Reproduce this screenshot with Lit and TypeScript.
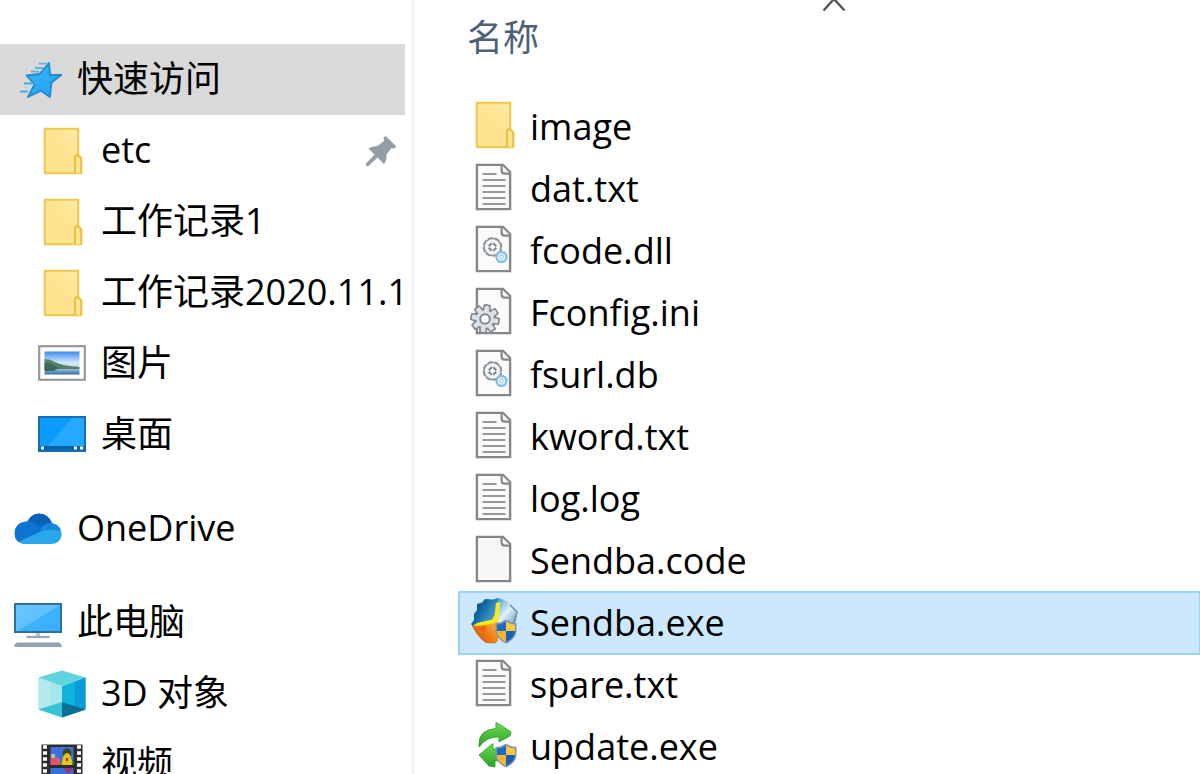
import { LitElement, html, css, svg, nothing, type TemplateResult } from "lit";
import { customElement, state } from "lit/decorators.js";
import { classMap } from "lit/directives/class-map.js";

const folder = svg`
  <defs>
    <linearGradient id="folderFill" x1="0" y1="1" x2="1" y2="0">
      <stop offset="0" stop-color="#ffe48a"></stop><stop offset="0.5" stop-color="#ffe391"></stop><stop offset="1" stop-color="#ffeba6"></stop>
    </linearGradient>
  </defs>
  <path d="M6.8 1.8H40.2V28.5L43.2 31.5V46.2H6.8Z" fill="url(#folderFill)" stroke="#ecc846" stroke-width="2"></path>
  <path d="M37 46V30.5Q37 28.3 38.6 28.3H40.4L43.2 31.5V46.2" fill="#ffe590" stroke="#e6c040" stroke-width="2"></path>`;

const sheet = svg`
  <path d="M6.9 1.9H33L40.1 9V46.1H6.9Z" fill="#fbfbfb" stroke="#858888" stroke-width="2.400"></path>
  <path d="M31.6 2V7.5Q31.6 10.6 34.6 10.6H40.1" fill="#f6f6f6" stroke="#858888" stroke-width="2.200"></path>`;

const textFile = svg`${sheet}
  <path d="M12.5 11H26.5M12.5 17H35.5M12.5 23H35.5M12.5 29H35.5M12.5 35H35.5M12.5 41H35.5" stroke="#969999" stroke-width="2.200"></path>`;

const blankFile = svg`${sheet}
  <path d="M10 5H29V13H37V43H10Z" fill="#f5f6f6"></path>`;

const libraryFile = svg`${sheet}
  <circle cx="22.5" cy="22" r="8.800" fill="#f3f5f6" stroke="#8b9399" stroke-width="2.200"></circle>
  <circle cx="22.5" cy="22" r="9.800" fill="none" stroke="#fbfbfb" stroke-width="1.600" stroke-dasharray="2 5.700"></circle>
  <path d="M22.5 17.500L27 22L22.5 26.500L18 22Z" fill="#fff" stroke="#788087" stroke-width="2" stroke-dasharray="4.400 2" stroke-dashoffset="-1"></path>
  <circle cx="31.5" cy="32" r="5" fill="#e4f3fc" stroke="#86bfe2" stroke-width="2.4"></circle>
  <circle cx="31.5" cy="32" r="1.8" fill="#fff" stroke="#a6d0ea" stroke-width="1.2"></circle>`;

const teeth = [0, 45, 90, 135, 180, 225, 270, 315];
const settingsFile = svg`${sheet}
  <g stroke="#7f878c" stroke-width="1.6" fill="#dce2e6">
    ${teeth.map((a) => svg`<path d="M-3.6 -9L-2.6 -14H2.6L3.6 -9Z" transform="translate(15 32) rotate(${a + 10})"></path>`)}
    <circle cx="15" cy="32" r="9.6"></circle>
  </g>
  ${teeth.map((a) => svg`<path d="M-2.4 -8L-2 -12H2L2.4 -8Z" fill="#dce2e6" transform="translate(15 32) rotate(${a + 10})"></path>`)}
  <circle cx="15" cy="32" r="4.8" fill="#fff" stroke="#7f878c" stroke-width="2"></circle>`;

const shield = svg`
  <path d="M36 22.5Q41 26 46.5 26V34Q46 42 36 46.5Q26 42 25.5 34V26Q31 26 36 22.5Z" fill="#7d97a8"></path>
  <path d="M36 24.5V34H27V27.5Q32 27.3 36 24.5Z" fill="#1d6bc6"></path>
  <path d="M36 24.5Q40 27.3 45 27.5V34H36Z" fill="#ffc73c"></path>
  <path d="M27 34H36V45Q27.6 41 27 34Z" fill="#fbb52a"></path>
  <path d="M45 34H36V45Q44.4 41 45 34Z" fill="#1560b9"></path>`;

const sendba = svg`
  <defs>
    <linearGradient id="sendBlue" x1="0" y1="0" x2="1" y2="0.6">
      <stop offset="0" stop-color="#0c3f78"></stop><stop offset="0.45" stop-color="#1669a6"></stop><stop offset="0.7" stop-color="#2f8fc6"></stop><stop offset="1" stop-color="#5d8fb0"></stop>
    </linearGradient>
    <linearGradient id="sendGlass" x1="0" y1="0" x2="0.8" y2="1">
      <stop offset="0" stop-color="#3a98cc"></stop><stop offset="0.55" stop-color="#e2f2fa"></stop><stop offset="1" stop-color="#6f9fba"></stop>
    </linearGradient>
    <linearGradient id="sendOrange" x1="0" y1="0.8" x2="1" y2="0">
      <stop offset="0" stop-color="#d24e08"></stop><stop offset="0.5" stop-color="#f08018"></stop><stop offset="1" stop-color="#ffc040"></stop>
    </linearGradient>
  </defs>
  <path d="M28 1L23 2.500L15 2L12 5.500L7 7L7 13L4 17L4 23L1 27L3 30L22 27L29 22L31 5Z" fill="url(#sendBlue)"></path>
  <path d="M28 1L34 3L40 7L43 12L47 15L46 24L42 29L27 24Z" fill="url(#sendGlass)"></path>
  <path d="M40 8L47 15L44 26" fill="none" stroke="#6b8da3" stroke-width="1.500"></path>
  <path d="M2 29L13 26L28 22V44L25 46.500L16 46L11 42L6 36Z" fill="url(#sendOrange)"></path>
  <path d="M9 31L16 27.500L15 37Z" fill="#e9640f"></path>
  <path d="M26 6L30 5L29 19L27 25L17 28L3 29L7 26L22 22.500L24.500 18Z" fill="#f7ea1a"></path>
  ${shield}`;

const update = svg`
  <defs>
    <linearGradient id="greenArrow" x1="0" y1="0" x2="0" y2="1">
      <stop offset="0" stop-color="#6edc50"></stop><stop offset="1" stop-color="#2a9f2b"></stop>
    </linearGradient>
  </defs>
  <path d="M9 24Q8 9 26 7.500V1.500L32 5L41 11L40 15L29 21V16Q17 15 9 26Z" fill="url(#greenArrow)" stroke="#3fa83c" stroke-width="1"></path>
  <path d="M9 34L23 22.5V28L33 28V39L25 40V46L19 45Z" fill="url(#greenArrow)" stroke="#3fa83c" stroke-width="1"></path>
  ${shield}`;

const star = svg`
  <defs>
    <linearGradient id="starFill" x1="0" y1="0" x2="1" y2="1">
      <stop offset="0" stop-color="#3fb6f8"></stop><stop offset="1" stop-color="#1c9ff0"></stop>
    </linearGradient>
  </defs>
  <path d="M35 7L36.200 18.800H47.500L37.500 26.500L36 41L27 34.800L14 41L20.500 28.500L12.500 19.500L25.500 18Z" fill="url(#starFill)" stroke="#2389c9" stroke-width="1.8" stroke-linejoin="round"></path>
  <path d="M25 7.700H33M21 12H29M17 15.700H25" stroke="#5cb3e6" stroke-width="1.800"></path>
  <path d="M10 27.500H18M6 35.500H14" stroke="#4ba9e2" stroke-width="2"></path>
  <path d="M10 31.500H16" stroke="#a9d7f2" stroke-width="1.400"></path>`;

const pictures = svg`
  <defs>
    <linearGradient id="skyFill" x1="0" y1="0" x2="0" y2="1">
      <stop offset="0" stop-color="#3f8af0"></stop><stop offset="0.5" stop-color="#d5ebf8"></stop><stop offset="0.7" stop-color="#b8d5e4"></stop><stop offset="1" stop-color="#2e6ca6"></stop>
    </linearGradient>
  </defs>
  <rect x="1.2" y="6.2" width="45.6" height="33.6" fill="#fff" stroke="#989898" stroke-width="2.2"></rect>
  <rect x="6.5" y="11.5" width="35" height="23" fill="url(#skyFill)"></rect>
  <path d="M6.5 19Q12 19 17 22Q24 26 41.5 27V29H6.5Z" fill="#54806a"></path>
  <path d="M6.5 23Q14 23 20 28L16 31H6.5Z" fill="#3e6a55"></path>`;

const desktop = svg`
  <rect x="1" y="6" width="46" height="34" fill="#0b9bfb" stroke="#1271b4" stroke-width="2"></rect>
  <path d="M34 7H46V35H10Z" fill="#27a8ff"></path>
  <rect x="2" y="35" width="44" height="4" fill="#0a62a8"></rect>
  <path d="M3 37H6M36 37H39M42 37H45" stroke="#fff" stroke-width="3"></path>`;

const cloud = svg`
  <path d="M13 17Q17 8.5 25 8.5Q34.500 8.5 38 18L30 27L9 24Z" fill="#0a62b8"></path>
  <path d="M11 39Q0.500 38 0.500 28.500Q0.500 18 11.500 16.500Q18 15.500 24 20L34 26.500L12 39Z" fill="#0d74d4"></path>
  <path d="M27 22Q32 17.500 38 18Q47.500 20 47.500 29.500L40 33L26 24Z" fill="#1688dc"></path>
  <path d="M5 36.500L29 25.500L46.500 25Q49 32 45 36Q42 39 38 39H11Q7.500 39 5 36.500Z" fill="#2aa7ea"></path>`;

const computer = svg`
  <defs>
    <linearGradient id="screenFill" x1="0" y1="0" x2="1" y2="1">
      <stop offset="0" stop-color="#6ac6ff"></stop><stop offset="0.5" stop-color="#5fc0ff"></stop><stop offset="0.52" stop-color="#3fb2ff"></stop><stop offset="1" stop-color="#38adfc"></stop>
    </linearGradient>
  </defs>
  <rect x="1" y="5" width="46" height="28" fill="url(#screenFill)" stroke="#2f7099" stroke-width="2"></rect>
  <path d="M22 34H26V37H22Z" fill="#b8c2cc"></path>
  <path d="M12.500 38H35.500" stroke="#9aa8b5" stroke-width="2.400"></path>
  <path d="M3 43.500H45L47.500 45.500V48H0.500V45.500Z" fill="#93a2b2"></path>`;

const cube = svg`
  <path d="M0.500 7.500L24 16V47.500L0.500 39.500Z" fill="#a5e6ea"></path>
  <path d="M0.500 7.500L12 11.500V43L0.500 39.500Z" fill="#b4eaec"></path>
  <path d="M24 16L47.500 7.500V39.500L24 47.500Z" fill="#0fb4dc"></path>
  <path d="M37 11.500L47.500 7.500V39.500L37 43Z" fill="#0a9bd8"></path>
  <path d="M0.500 7.500L24 0.500L47.500 7.500L24 16Z" fill="#5fd3e0"></path>
  <path d="M0.500 39.500L24 32V47.500Z" fill="#35c4d6"></path>
  <path d="M24 32L47.500 39.500L24 47.500Z" fill="#0a6f93"></path>`;

const holes = [6, 12, 18, 24, 30, 36, 42];
const film = svg`
  <rect x="3.500" y="3.500" width="41" height="44" fill="#2c2c2c"></rect>
  ${holes.map((y) => svg`<path d="M5 ${y}H9M39 ${y}H43" stroke="#fff" stroke-width="3.600"></path>`)}
  <rect x="12.500" y="6" width="23" height="18" fill="#3e6fe0"></rect>
  <path d="M12.500 18Q16 12 22 19V24H12.500Z" fill="#e05470"></path>
  <path d="M13 13H17V17H13Z" fill="#a9c3a0"></path>
  <path d="M22 20H35.500V24H22Z" fill="#3f9a3c"></path>
  <circle cx="29" cy="12" r="4.500" fill="#3a4a1c"></circle>
  <path d="M24 24Q24 13 29 12Q34 13 34 24Z" fill="#e8c414"></path>
  <path d="M28 17H30V20H28Z" fill="#8a3a1a"></path>
  <rect x="12.500" y="27" width="23" height="18" fill="#3470d8"></rect>
  <path d="M25 27H35L31 33Z" fill="#a2356e"></path>`;

interface Place { name: string; icon: TemplateResult; nested?: boolean; pinned?: boolean; }
interface FileEntry { name: string; icon: TemplateResult; }

const groups: Place[][] = [
  [
    { name: "快速访问", icon: star },
    { name: "etc", icon: folder, nested: true, pinned: true },
    { name: "工作记录1", icon: folder, nested: true },
    { name: "工作记录2020.11.1", icon: folder, nested: true },
    { name: "图片", icon: pictures, nested: true },
    { name: "桌面", icon: desktop, nested: true },
  ],
  [{ name: "OneDrive", icon: cloud }],
  [
    { name: "此电脑", icon: computer },
    { name: "3D 对象", icon: cube, nested: true },
    { name: "视频", icon: film, nested: true },
  ],
];

const files: FileEntry[] = [
  { name: "image", icon: folder },
  { name: "dat.txt", icon: textFile },
  { name: "fcode.dll", icon: libraryFile },
  { name: "Fconfig.ini", icon: settingsFile },
  { name: "fsurl.db", icon: libraryFile },
  { name: "kword.txt", icon: textFile },
  { name: "log.log", icon: textFile },
  { name: "Sendba.code", icon: blankFile },
  { name: "Sendba.exe", icon: sendba },
  { name: "spare.txt", icon: textFile },
  { name: "update.exe", icon: update },
];

@customElement("app-root")
export class AppRoot extends LitElement {
  @state() private place = "快速访问";
  @state() private selected = "Sendba.exe";
  @state() private ascending = true;

  static styles = css`
    :host {
      display: flex;
      height: 100vh;
      overflow: hidden;
      background: #fff;
      color: #000;
      font-family: "Open Sans", "Noto Sans CJK SC", sans-serif;
      font-size: 36px;
      line-height: 48px;
    }
    * { box-sizing: border-box; }
    .icon { flex: none; width: 48px; height: 48px; }
    .places {
      flex: none;
      width: 414px;
      padding: 44px 6px 0 0;
      border-right: 3px solid #f5f5f5;
    }
    .group { margin: 0 0 23px; padding: 0; list-style: none; }
    .place {
      display: flex;
      align-items: center;
      gap: 15px;
      height: 71px;
      padding-left: 14px;
      color: inherit;
      text-decoration: none;
      white-space: nowrap;
    }
    .nested { padding-left: 38px; }
    .current { background: #d9d9d9; }
    .label { flex: 1; min-width: 0; padding-bottom: 2px; }
    .pin { flex: none; width: 32px; height: 32px; margin-right: 8px; }
    .listing { flex: 1; min-width: 0; padding-left: 45px; }
    .files { width: 100%; border-collapse: collapse; }
    .column { height: 96px; padding: 0; vertical-align: top; text-align: left; font-weight: 400; }
    .sort {
      display: block;
      width: 100%;
      padding: 0 0 0 8px;
      border: 0;
      background: none;
      color: #4c607a;
      font: inherit;
      text-align: left;
    }
    .caret { display: block; width: 24px; height: 12px; margin: 0 auto 2px; }
    .descending { transform: scaleY(-1); }
    .cell { height: 62px; padding: 0; }
    .file {
      display: flex;
      align-items: center;
      gap: 12px;
      width: 100%;
      height: 62px;
      padding: 0 0 0 11px;
      border: 0;
      background: none;
      color: inherit;
      font: inherit;
      text-align: left;
    }
    .file .icon { margin-bottom: 4px; }
    .chosen { background: #cce8ff; outline: 2px solid #99d1ff; outline-offset: -1px; }
  `;

  private renderPlace(p: Place) {
    return html`<li>
      <a href="#" class=${classMap({ place: true, nested: !!p.nested, current: p.name === this.place })}
        @click=${(e: Event) => { e.preventDefault(); this.place = p.name; }}>
        <svg class="icon" viewBox="0 0 48 48" aria-hidden="true">${p.icon}</svg>
        <span class="label">${p.name}</span>
        ${p.pinned ? html`<svg class="pin" viewBox="0 0 32 32" aria-hidden="true">
          <path d="M20.500 1L31 11L29.500 13.500L26.500 13L21.500 19.500Q22 25 19 29L12.500 22.500L3.500 31L1 31V28.500L9.500 19.500L3.500 13.500Q8 10.500 12.500 11L19 6L18.500 3Z" fill="#929da5"></path>
        </svg>` : nothing}
      </a>
    </li>`;
  }

  render() {
    const rows = this.ascending ? files : [...files].reverse();
    return html`
      <nav class="places">
        ${groups.map((g) => html`<ul class="group">${g.map((p) => this.renderPlace(p))}</ul>`)}
      </nav>
      <main class="listing">
        <table class="files">
          <thead>
            <tr>
              <th class="column" scope="col">
                <button class="sort" @click=${() => { this.ascending = !this.ascending; }}>
                  <svg class=${classMap({ caret: true, descending: !this.ascending })} viewBox="0 0 24 12" aria-hidden="true">
                    <path d="M1.500 10.500L12 -1L22.500 10.500" fill="none" stroke="#555" stroke-width="2.400"></path>
                  </svg>
                  名称
                </button>
              </th>
            </tr>
          </thead>
          <tbody>
            ${rows.map((f) => html`<tr>
              <td class="cell">
                <button class=${classMap({ file: true, chosen: f.name === this.selected })}
                  @click=${() => { this.selected = f.name; }}>
                  <svg class="icon" viewBox="0 0 48 48" aria-hidden="true">${f.icon}</svg>
                  <span>${f.name}</span>
                </button>
              </td>
            </tr>`)}
          </tbody>
        </table>
      </main>`;
  }
}
